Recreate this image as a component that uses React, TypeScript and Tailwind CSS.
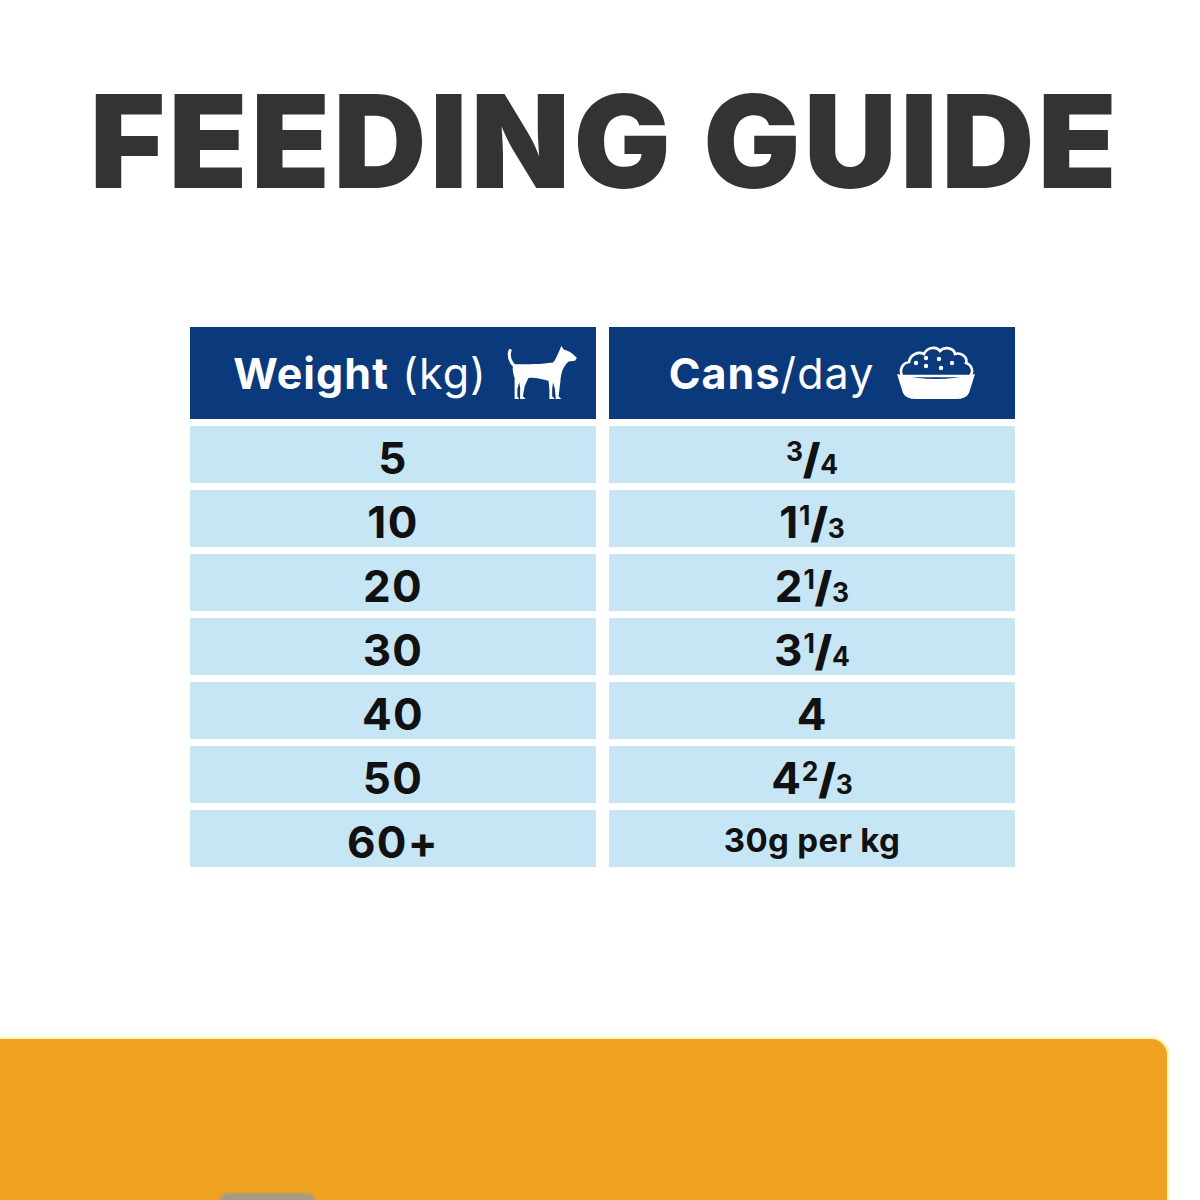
import React from 'react';

const font = { fontFamily: 'Inter, "Liberation Sans", sans-serif' };

const DogIcon = () => (
  <svg width="76" height="54" viewBox="8 5 78 59" fill="#fff">
    <path d="M16,27 C11,22 9,16 11,10" stroke="#fff" strokeWidth="3.4" strokeLinecap="round" fill="none" />
    <path d="M15,25 C30,25 46,25 58,23 C61,20 63,14 65,10 L67,5 L70,9 C74,10 78,12 81,15 L84,18 L82,21 L75,22 C72,24 70,28 68,32 C67,36 66,40 66,44 L65,52 L64,60 L67,63 L61,63 L60,52 L58,45 L57,52 L57,60 L60,63 L54,63 L54,52 L53,43 C45,41 38,39 31,40 L27,49 L25,60 L28,63 L22,63 L22,50 L21,45 L19,52 L19,60 L21,63 L16,63 L16,50 L16,40 C14,34 13,29 15,25 Z" />
  </svg>
);

const BowlIcon = () => (
  <svg width="80" height="54" viewBox="10 10 80 54">
    <path
      d="M16,40 C13,33 17,27 23,26 C24,19 32,15 38,18 C41,11 51,10 54,15 C59,10 68,12 69,18 C75,16 82,21 80,27 C86,29 88,36 84,40 Z"
      fill="#0b3a7c"
      stroke="#fff"
      strokeWidth="2.6"
    />
    <g fill="#fff">
      <circle cx="30" cy="27" r="2.2" />
      <circle cx="40" cy="22" r="2.2" />
      <circle cx="53" cy="23" r="2.2" />
      <circle cx="66" cy="27" r="2.2" />
      <circle cx="40" cy="30" r="2.2" />
      <circle cx="55" cy="32" r="2.2" />
    </g>
    <path d="M11,38 Q50,48 89,38 L83,57 Q80,63 70,63 L30,63 Q20,63 17,57 Z" fill="#fff" />
  </svg>
);

const Frac = ({ w, n, d }: { w?: string; n: string; d: string }) => (
  <span className="whitespace-nowrap">
    {w}
    <span className="text-[0.6em] align-[0.5em] tracking-normal">{n}</span>
    <span className="inline-block text-[0.95em] font-black tracking-normal">/</span>
    <span className="text-[0.6em] tracking-normal">{d}</span>
  </span>
);

const rows: { kg: string; cans: React.ReactNode; small?: boolean }[] = [
  { kg: '5', cans: <Frac n="3" d="4" /> },
  { kg: '10', cans: <Frac w="1" n="1" d="3" /> },
  { kg: '20', cans: <Frac w="2" n="1" d="3" /> },
  { kg: '30', cans: <Frac w="3" n="1" d="4" /> },
  { kg: '40', cans: '4' },
  { kg: '50', cans: <Frac w="4" n="2" d="3" /> },
  { kg: '60+', cans: '30g per kg', small: true },
];

export default function App() {
  return (
    <div className="w-[1200px] h-[1200px] bg-white flex flex-col overflow-hidden relative" style={font}>
      <h1 className="pt-[77px] pl-[10px] text-center text-[129px] leading-none font-black text-[#333333] tracking-[0.026em]">
        FEEDING GUIDE
      </h1>

      <div className="mt-[121px] ml-[190px] w-[825px] grid grid-cols-2 gap-x-[13px] gap-y-[7px] grid-rows-[92px_repeat(7,57px)]">
        <div className="bg-[#0b3a7c] flex items-center justify-center pl-[28px] gap-[18px] text-white text-[43px] leading-none tracking-[0.025em]">
          <span className="whitespace-nowrap">
            <span className="font-bold">Weight</span> (kg)
          </span>
          <DogIcon />
        </div>
        <div className="bg-[#0b3a7c] flex items-center justify-center pl-[21px] gap-[22px] text-white text-[43px] leading-none tracking-[0.025em]">
          <span className="whitespace-nowrap">
            <span className="font-bold">Cans</span>/day
          </span>
          <BowlIcon />
        </div>

        {rows.map((r) => (
          <React.Fragment key={r.kg}>
            <div className="bg-[#c6e6f5] flex items-center justify-center pt-[7px] text-[44px] font-bold text-[#111] leading-none tracking-[0.03em]">
              {r.kg}
            </div>
            <div
              className={`bg-[#c6e6f5] flex items-center justify-center font-bold text-[#111] leading-none ${
                r.small ? 'text-[33px] pt-[4px] tracking-[0.01em]' : 'text-[44px] pt-[7px] tracking-[0.02em]'
              }`}
            >
              {r.cans}
            </div>
          </React.Fragment>
        ))}
      </div>

      <div className="mt-[172px] w-[1167px] h-[170px] shrink-0 bg-[#eea220] rounded-tr-[16px] shadow-[1px_-1px_2px_1px_#fff2a6] relative">
        <div className="absolute left-[220px] top-[154px] w-[95px] h-[20px] rounded-t-[8px] bg-[#a89b86] blur-[1px]" />
      </div>
    </div>
  );
}
